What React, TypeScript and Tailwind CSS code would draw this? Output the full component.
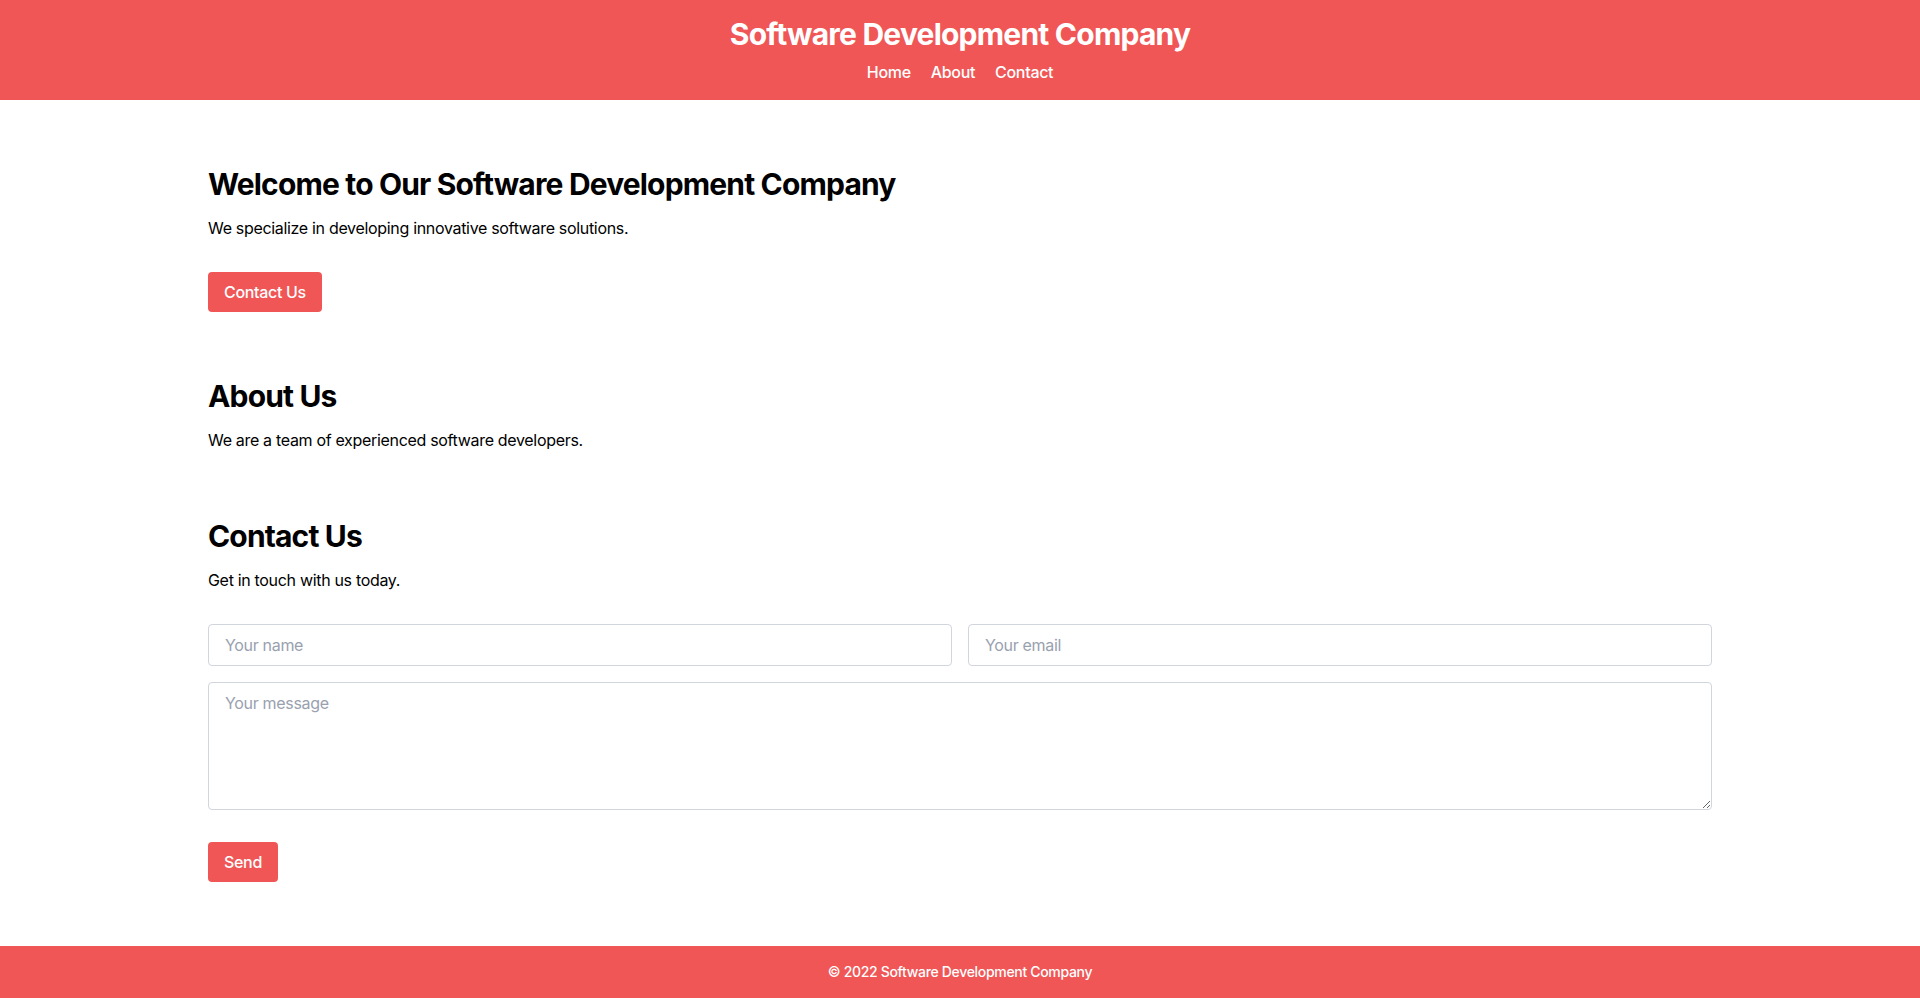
export default function App() {
  return (
    <div className="min-h-screen flex flex-col bg-white text-black tracking-[-0.02em] font-['Inter',_'Liberation_Sans',_sans-serif]">
      <header className="bg-[#f05656] text-white py-4 text-center">
        <h1 className="text-3xl font-bold leading-9 tracking-[-0.026em]">Software Development Company</h1>
        <nav className="mt-2 flex justify-center gap-5 font-medium">
          <a href="#" className="leading-6">Home</a>
          <a href="#about" className="leading-6">About</a>
          <a href="#contact" className="leading-6">Contact</a>
        </nav>
      </header>

      <main className="flex-1 container mx-auto px-4 py-8">
        <section className="py-8">
          <h2 className="text-3xl font-bold leading-10 mb-3 tracking-[-0.028em]">
            Welcome to Our Software Development Company
          </h2>
          <p>We specialize in developing innovative software solutions.</p>
          <button className="mt-8 bg-[#f05656] text-white px-4 py-2 rounded font-medium">Contact Us</button>
        </section>

        <section id="about" className="py-8">
          <h2 className="text-3xl font-bold leading-10 mb-3 tracking-[-0.028em]">About Us</h2>
          <p>We are a team of experienced software developers.</p>
        </section>

        <section id="contact" className="py-8">
          <h2 className="text-3xl font-bold leading-10 mb-3 tracking-[-0.028em]">Contact Us</h2>
          <p>Get in touch with us today.</p>
          <form className="mt-8" onSubmit={(e) => e.preventDefault()}>
            <div className="grid grid-cols-2 gap-4">
              <input
                type="text"
                placeholder="Your name"
                className="border border-gray-300 rounded px-4 py-2 placeholder:text-gray-400 outline-none"
              />
              <input
                type="email"
                placeholder="Your email"
                className="border border-gray-300 rounded px-4 py-2 placeholder:text-gray-400 outline-none"
              />
            </div>
            <textarea
              placeholder="Your message"
              className="mt-4 block w-full h-32 border border-gray-300 rounded px-4 py-2 placeholder:text-gray-400 outline-none"
            />
            <button type="submit" className="mt-8 bg-[#f05656] text-white px-4 py-2 rounded font-medium">
              Send
            </button>
          </form>
        </section>
      </main>

      <footer className="bg-[#f05656] text-white text-center py-4 text-sm font-medium">
        © 2022 Software Development Company
      </footer>
    </div>
  );
}
